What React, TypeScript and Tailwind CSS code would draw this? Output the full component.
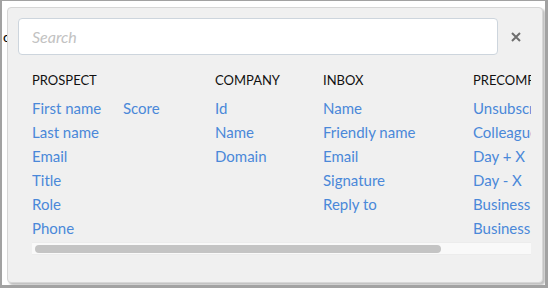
const font = { fontFamily: 'Lato, "Open Sans", sans-serif' }

type Column = {
  title: string
  width: string
  groups: string[][]
}

const columns: Column[] = [
  {
    title: 'PROSPECT',
    width: 'w-[183px]',
    groups: [['First name', 'Last name', 'Email', 'Title', 'Role', 'Phone'], ['Score']],
  },
  { title: 'COMPANY', width: 'w-[108px]', groups: [['Id', 'Name', 'Domain']] },
  {
    title: 'INBOX',
    width: 'w-[150px]',
    groups: [['Name', 'Friendly name', 'Email', 'Signature', 'Reply to']],
  },
  {
    title: 'PRECOMPUTED',
    width: 'w-[150px]',
    groups: [['Unsubscribe link', 'Colleague', 'Day + X', 'Day - X', 'Business day + X', 'Business day - X']],
  },
]

function VariableColumn({ column }: { column: Column }) {
  return (
    <div className={`${column.width} shrink-0`}>
      <div className="h-[24px] text-[13px] leading-[24px] text-[#111] whitespace-nowrap">{column.title}</div>
      <div className="mt-[4px] flex">
        {column.groups.map((group, i) => (
          <div key={i} className="w-[91px] flex flex-col">
            {group.map((item) => (
              <a
                key={item}
                href="#"
                className="h-[24px] text-[15px] leading-[24px] text-[#4a88d9] whitespace-nowrap"
              >
                {item}
              </a>
            ))}
          </div>
        ))}
      </div>
    </div>
  )
}

export default function App() {
  return (
    <div className="w-[548px] h-[288px] bg-[#a2a2a2] pt-[1px] pl-[2px] pr-[3px] pb-[3px]" style={font}>
      <div className="relative h-full bg-white overflow-hidden">
        <div className="absolute left-[1px] top-[25px] text-[14px] text-black">c</div>
        <div className="absolute left-[5px] top-[6px] w-[536px] h-[276px] rounded-[4px] border border-[#d6d6d6] bg-[#f0f0f0] shadow-[2px_2px_2px_rgba(0,0,0,0.25)] pt-[10px] pl-[10px]">
          <div className="flex items-center">
            <input
              placeholder="Search"
              className="w-[480px] h-[37px] rounded-[4px] border border-[#cdd5dd] bg-white pl-[13px] text-[16px] italic placeholder:text-[#c2c2c2] outline-none"
            />
            <button className="ml-[11px] w-[14px] h-[14px] flex items-center justify-center text-[#6e6e6e]">
              <svg width="10" height="10" viewBox="0 0 10 10">
                <path d="M1 1L9 9M9 1L1 9" stroke="currentColor" strokeWidth="2" strokeLinecap="butt" />
              </svg>
            </button>
          </div>
          <div className="ml-[14px] mt-[13px] w-[499px] overflow-hidden">
            <div className="flex">
              {columns.map((c) => (
                <VariableColumn key={c.title} column={c} />
              ))}
            </div>
            <div className="mt-[2px] h-[13px] bg-[#f9f9f9] border-y border-[#ececec] flex items-center px-[3px]">
              <div className="w-[406px] h-[8px] rounded-full bg-[#c4c4c4]" />
            </div>
          </div>
        </div>
      </div>
    </div>
  )
}
